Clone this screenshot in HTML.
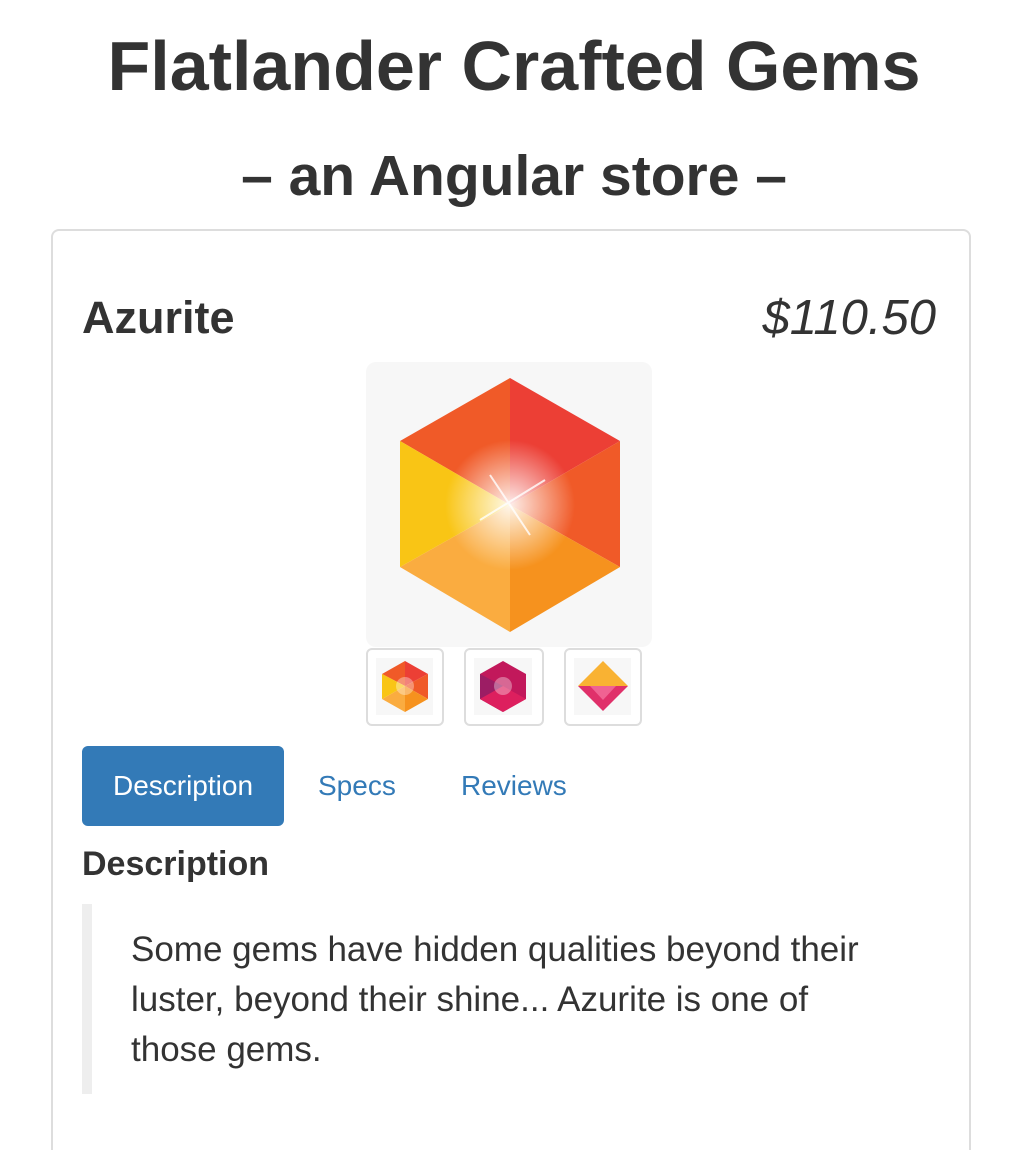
<!DOCTYPE html>
<html style="height:1150px;overflow:hidden"><head><style>
body{margin:0;background:#fff;font-family:"Liberation Sans",Arial,sans-serif;color:#333;width:1028px;height:1150px;overflow:hidden;position:relative}
.a{position:absolute}
h1{position:absolute;left:0;width:1028px;text-align:center;margin:0;font-weight:bold}
</style></head><body>
<h1 style="top:26px;font-size:70px">Flatlander Crafted Gems</h1>
<h1 style="top:143px;font-size:57px">– an Angular store –</h1>
<div class="a" style="left:51px;top:229px;width:916px;height:940px;border:2px solid #ddd;border-bottom:none;border-radius:8px 8px 0 0"></div>
<div class="a" style="left:82px;top:292px;font-size:45px;font-weight:bold">Azurite</div>
<div class="a" style="right:92px;top:290px;font-size:49px;font-style:italic">$110.50</div>
<div class="a" style="left:366px;top:362px;width:286px;height:285px;background:#f7f7f7;border-radius:10px"></div>
<svg class="a" style="left:366px;top:362px" width="286" height="285" viewBox="366 362 286 285">
<defs><radialGradient id="g"><stop offset="0" stop-color="#fff" stop-opacity=".9"/><stop offset="1" stop-color="#fff" stop-opacity="0"/></radialGradient></defs>
<polygon points="510,378 400,441 510,505" fill="#f05a28"/>
<polygon points="510,378 620,441 510,505" fill="#ec3f35"/>
<polygon points="620,441 620,567 510,505" fill="#f05a28"/>
<polygon points="620,567 510,632 510,505" fill="#f6921e"/>
<polygon points="510,632 400,567 510,505" fill="#faac40"/>
<polygon points="400,567 400,441 510,505" fill="#f9c515"/>
<circle cx="510" cy="505" r="65" fill="url(#g)"/>
<path d="M490 475L530 535M480 520L545 480" stroke="#fff" stroke-width="2" opacity=".8"/>
</svg>
<div class="a" style="left:366px;top:648px;width:74px;height:74px;border:2px solid #ddd;border-radius:6px"></div>
<div class="a" style="left:464px;top:648px;width:76px;height:74px;border:2px solid #ddd;border-radius:6px"></div>
<div class="a" style="left:564px;top:648px;width:74px;height:74px;border:2px solid #ddd;border-radius:6px"></div>
<svg class="a" style="left:0;top:0" width="1028" height="800">
<rect x="376" y="658" width="57" height="57" fill="#f7f7f7"/>
<rect x="474" y="658" width="58" height="57" fill="#f7f7f7"/>
<rect x="574" y="658" width="57" height="57" fill="#f7f7f7"/>
<polygon points="405,661 428,674 405,686" fill="#ec3f35"/><polygon points="405,661 382,674 405,686" fill="#f05a28"/>
<polygon points="428,674 428,699 405,686" fill="#f05a28"/><polygon points="428,699 405,712 405,686" fill="#f6921e"/>
<polygon points="405,712 382,699 405,686" fill="#faac40"/><polygon points="382,699 382,674 405,686" fill="#f9c515"/>
<circle cx="405" cy="686" r="9" fill="#fff" opacity=".35"/>
<polygon points="503,661 526,674 526,699 503,712 480,699 480,674" fill="#c2185b"/>
<polygon points="480,674 503,686 503,712 480,699" fill="#9c1d64"/>
<polygon points="503,686 526,699 503,712 480,699" fill="#dd1f5e"/>
<circle cx="503" cy="686" r="9" fill="#fff" opacity=".35"/>
<polygon points="603,661 628,686 578,686" fill="#f9b233"/>
<polygon points="578,686 628,686 603,711" fill="#e0306a"/>
<polygon points="590,686 616,686 603,700" fill="#f06292"/>
</svg>
<div class="a" style="left:82px;top:746px;width:202px;height:80px;background:#337ab7;border-radius:6px;color:#fff;font-size:28px;line-height:80px;text-align:center">Description</div>
<div class="a" style="left:318px;top:746px;font-size:28px;line-height:80px;color:#337ab7">Specs</div>
<div class="a" style="left:461px;top:746px;font-size:28px;line-height:80px;color:#337ab7">Reviews</div>
<div class="a" style="left:82px;top:845px;font-size:34px;font-weight:bold">Description</div>
<div class="a" style="left:82px;top:904px;width:10px;height:190px;background:#eee"></div>
<div class="a" style="left:131px;top:925px;width:880px;font-size:35px;line-height:50px">Some gems have hidden qualities beyond their<br>luster, beyond their shine... Azurite is one of<br>those gems.</div>
</body></html>
